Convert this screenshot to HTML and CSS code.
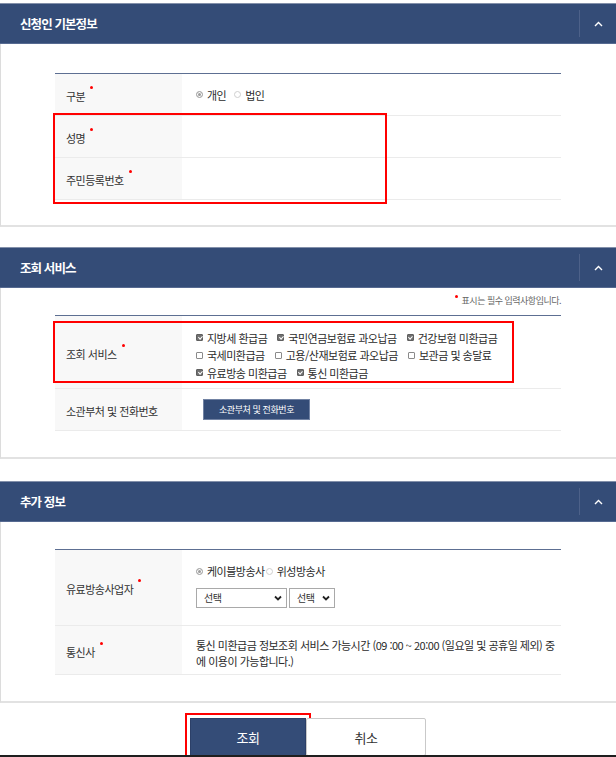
FILE: index.html
```html
<!DOCTYPE html>
<html lang="ko">
<head>
<meta charset="utf-8">
<title>조회</title>
<link rel="stylesheet" href="styles.css">
</head>
<body>
<div class="page">

  <section class="panel panel-basic">
    <div class="panel-head">
      <h2 class="panel-title">신청인 기본정보</h2>
      <span class="toggle"><svg width="9" height="6" viewBox="0 0 9 6"><polyline points="1,5 4.5,1.5 8,5" fill="none" stroke="#fff" stroke-width="1.4"/></svg></span>
    </div>
    <div class="panel-body">
      <div class="form">
        <div class="row h42">
          <div class="lbl"><span>구분<i class="req"></i></span></div>
          <div class="val"><span class="radio on"></span><span class="opt">개인</span><span class="radio"></span><span class="opt">법인</span></div>
        </div>
        <div class="row h42">
          <div class="lbl"><span>성명<i class="req"></i></span></div>
          <div class="val"></div>
        </div>
        <div class="row h42">
          <div class="lbl"><span>주민등록번호<i class="req"></i></span></div>
          <div class="val"></div>
        </div>
        <div class="mark mark-name"></div>
      </div>
    </div>
  </section>

  <section class="panel panel-service">
    <div class="panel-head">
      <h2 class="panel-title">조회 서비스</h2>
      <span class="toggle"><svg width="9" height="6" viewBox="0 0 9 6"><polyline points="1,5 4.5,1.5 8,5" fill="none" stroke="#fff" stroke-width="1.4"/></svg></span>
    </div>
    <div class="panel-body">
      <p class="note"><i class="req req-note"></i>표시는 필수 입력사항입니다.</p>
      <div class="form">
        <div class="row h73">
          <div class="lbl"><span>조회 서비스<i class="req"></i></span></div>
          <div class="val val-top">
            <div class="chk-lines">
              <div class="chk-line">
                <span class="chk"><span class="cb on"></span>지방세 환급금</span>
                <span class="chk"><span class="cb on"></span>국민연금보험료 과오납금</span>
                <span class="chk"><span class="cb on"></span>건강보험 미환급금</span>
              </div>
              <div class="chk-line">
                <span class="chk"><span class="cb"></span>국세미환급금</span>
                <span class="chk"><span class="cb"></span>고용/산재보험료 과오납금</span>
                <span class="chk"><span class="cb"></span>보관금 및 송달료</span>
              </div>
              <div class="chk-line">
                <span class="chk"><span class="cb on"></span>유료방송 미환급금</span>
                <span class="chk"><span class="cb on"></span>통신 미환급금</span>
              </div>
            </div>
          </div>
        </div>
        <div class="row h42">
          <div class="lbl lbl-plain"><span>소관부처 및 전화번호</span></div>
          <div class="val"><button class="btn-sm" type="button">소관부처 및 전화번호</button></div>
        </div>
        <div class="mark mark-svc"></div>
      </div>
    </div>
  </section>

  <section class="panel panel-extra">
    <div class="panel-head">
      <h2 class="panel-title">추가 정보</h2>
      <span class="toggle"><svg width="9" height="6" viewBox="0 0 9 6"><polyline points="1,5 4.5,1.5 8,5" fill="none" stroke="#fff" stroke-width="1.4"/></svg></span>
    </div>
    <div class="panel-body">
      <div class="form">
        <div class="row h76">
          <div class="lbl"><span>유료방송사업자<i class="req"></i></span></div>
          <div class="val val-top val-broadcast">
            <div class="radio-line"><span class="radio on"></span><span class="opt opt-tight">케이블방송사</span><span class="radio"></span><span class="opt">위성방송사</span></div>
            <div class="sel-line">
              <span class="sel sel-wide">선택<svg width="8" height="6" viewBox="0 0 8 6"><polyline points="1,1.5 4,4.5 7,1.5" fill="none" stroke="#222" stroke-width="1.8"/></svg></span>
              <span class="sel sel-narrow">선택<svg width="8" height="6" viewBox="0 0 8 6"><polyline points="1,1.5 4,4.5 7,1.5" fill="none" stroke="#222" stroke-width="1.8"/></svg></span>
            </div>
          </div>
        </div>
        <div class="row h49">
          <div class="lbl"><span>통신사<i class="req"></i></span></div>
          <div class="val val-top val-text">통신 미환급금 정보조회 서비스 가능시간 (09 :00 ~ 20:00 (일요일 및 공휴일 제외) 중<br>에 이용이 가능합니다.)</div>
        </div>
      </div>
    </div>
  </section>

  <div class="btn-row">
    <button class="btn btn-primary" type="button">조회</button>
    <button class="btn btn-line" type="button">취소</button>
  </div>
</div>
<div class="bottom-edge"></div>
</body>
</html>
```

FILE: styles.css
```css
html, body {
  margin: 0;
  padding: 0;
  overflow: hidden;
  background: #fff;
}

body {
  font-family: "Noto Sans CJK KR", "Noto Sans", sans-serif;
  font-size: 11px;
  letter-spacing: -0.5px;
  color: #2b2b2b;
}

.page {
  padding-top: 3px;
}

/* panels */
.panel-head {
  height: 41px;
  box-sizing: border-box;
  background: #344c77;
  border-top: 1px solid #8390aa;
  border-bottom: 1px solid #566a91;
  display: flex;
  align-items: center;
  justify-content: space-between;
}

.panel-title {
  margin: 0 0 0 20px;
  font-size: 12.5px;
  font-weight: 700;
  letter-spacing: -0.9px;
  line-height: 16px;
  color: #fff;
}

.toggle {
  width: 37px;
  height: 27px;
  box-sizing: border-box;
  border-left: 1px solid #4d6189;
  display: flex;
  align-items: center;
  justify-content: center;
}

.panel-body {
  border-left: 1px solid #dcdcdc;
  border-bottom: 2px solid #e2e2e2;
  padding: 27px 0 26px 54px;
}

.panel-basic {
  margin-bottom: 20px;
}
.panel-basic .panel-body {
  padding-top: 29px;
  padding-bottom: 25px;
}

.panel-service {
  margin-bottom: 22px;
}
.panel-service .panel-body {
  padding-top: 5px;
}

/* required note */
.note {
  width: 506px;
  margin: 0 0 6px;
  text-align: right;
  font-size: 9px;
  line-height: 16px;
  letter-spacing: -0.5px;
  color: #666;
}

.req {
  display: inline-block;
  width: 3px;
  height: 3px;
  border-radius: 50%;
  background: #f00;
  margin-left: 5px;
  vertical-align: 12px;
}

.req-note {
  margin: 0 4px 0 0;
  vertical-align: 6px;
}

/* form table */
.form {
  position: relative;
  width: 506px;
  border-top: 1px solid #5d6f92;
}

.row {
  display: grid;
  grid-template-columns: 127px 1fr;
  box-sizing: border-box;
  border-bottom: 1px solid #ebebeb;
}

.h42 { height: 42px; }
.h73 { height: 73px; }
.h76 { height: 76px; }
.h49 { height: 49px; }

.lbl {
  background: #f8f8f8;
  display: flex;
  align-items: center;
  padding: 1px 0 0 11px;
  line-height: 16px;
  color: #333;
}

.lbl-plain {
  padding-top: 2px;
}

.val {
  display: flex;
  align-items: center;
  padding-left: 14px;
  line-height: 16px;
}

.val-top {
  align-items: flex-start;
  padding-top: 13px;
}

/* radios */
.radio {
  width: 7px;
  height: 7px;
  box-sizing: border-box;
  border: 1px solid #cfcfcf;
  border-radius: 50%;
  background: #fff;
  margin-right: 4px;
  flex: none;
}

.radio.on {
  border-color: #a9a9a9;
  background: #9b9b9b;
  box-shadow: inset 0 0 0 1px #fff;
}

.opt {
  margin-right: 8px;
}

.opt-tight {
  margin-right: 1px;
}

/* checkboxes */
.chk-lines {
  display: flex;
  flex-direction: column;
}

.chk-line {
  display: flex;
  align-items: center;
  height: 17.5px;
}

.chk {
  display: inline-flex;
  align-items: center;
  margin-right: 10px;
}

.cb {
  position: relative;
  width: 7px;
  height: 7px;
  box-sizing: border-box;
  border: 1px solid #8a8a8a;
  border-radius: 1px;
  background: #fff;
  margin-right: 4px;
  flex: none;
}

.cb.on {
  border-color: #5f5f5f;
  background: #707070;
}

.cb.on::after {
  content: "";
  position: absolute;
  left: 1.5px;
  top: 0px;
  width: 1.5px;
  height: 3px;
  border-right: 1px solid #fff;
  border-bottom: 1px solid #fff;
  transform: rotate(45deg);
}

/* small button */
.btn-sm {
  margin-left: 7px;
  width: 107px;
  height: 21px;
  padding: 0;
  border: 1px solid #7182a3;
  background: #344c77;
  color: #fff;
  font-family: inherit;
  font-size: 9px;
  letter-spacing: -0.4px;
  line-height: 19px;
}

/* broadcast row */
.val-broadcast {
  flex-direction: column;
}

.radio-line {
  display: flex;
  align-items: center;
  height: 16px;
}

.sel-line {
  display: flex;
  gap: 2px;
  margin-top: 9px;
}

.sel {
  display: inline-flex;
  align-items: center;
  justify-content: space-between;
  height: 20px;
  box-sizing: border-box;
  border: 1px solid #a9a9a9;
  background: #fff;
  padding: 0 4px 0 7px;
  font-size: 10px;
  color: #333;
}

.sel-wide { width: 91px; }
.sel-narrow { width: 46px; }

.val-text {
  padding-top: 12px;
  line-height: 15.5px;
  display: block;
}

/* annotation boxes */
.mark {
  position: absolute;
  box-sizing: border-box;
  border: 2px solid #f00;
  pointer-events: none;
}

.mark-name {
  left: -2px;
  top: 39px;
  width: 334px;
  height: 91px;
}

.mark-svc {
  left: -2px;
  top: 5px;
  width: 461px;
  height: 62px;
}

/* bottom buttons */
.btn-row {
  display: flex;
  justify-content: center;
  margin-top: 15px;
}

.btn {
  height: 38px;
  padding: 0;
  font-family: inherit;
  font-size: 13px;
  letter-spacing: -0.5px;
}

.btn-primary {
  width: 116px;
  background: #344c77;
  color: #fff;
  border: 1px solid #2c4068;
  border-radius: 0;
  outline: 2px solid #f00;
  outline-offset: 3px;
}

.btn-line {
  width: 120px;
  background: #fff;
  color: #333;
  border: 1px solid #c9c9c9;
  border-radius: 2px;
}

.bottom-edge {
  position: fixed;
  left: 0;
  right: 0;
  bottom: 0;
  height: 2px;
  background: #1e1e1e;
}
```
